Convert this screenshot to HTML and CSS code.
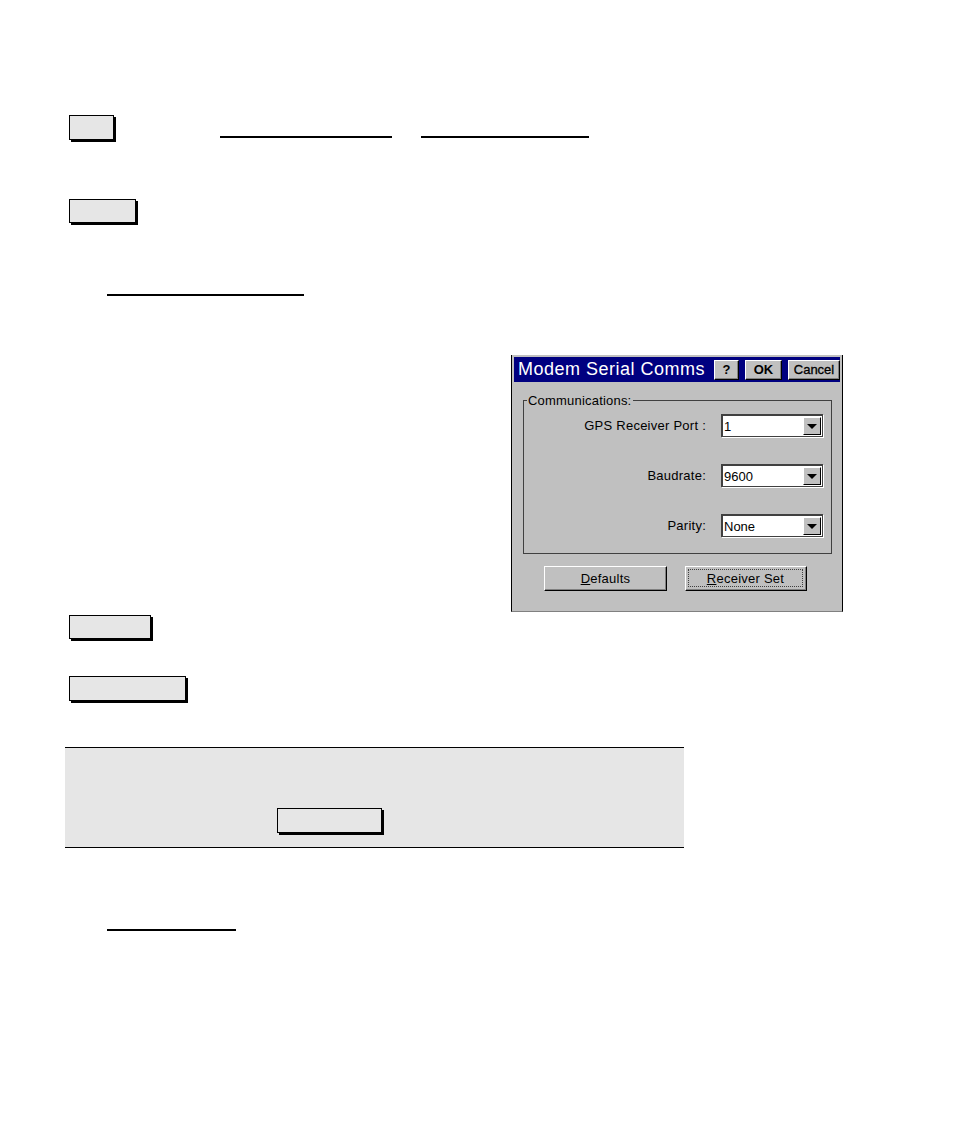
FILE: index.html
```html
<!DOCTYPE html>
<html>
<head>
<meta charset="utf-8">
<link rel="stylesheet" href="styles.css">
</head>
<body>
<div class="page">
  <div class="row1">
    <div class="key key-1"></div>
    <div class="uline uline-a"></div>
    <div class="uline uline-b"></div>
  </div>
  <div class="key key-2"></div>
  <div class="uline uline-c"></div>

  <div class="dialog">
    <div class="titlebar">
      <span class="title">Modem Serial Comms</span>
      <span class="tbtn tbtn-q">?</span>
      <span class="tbtn tbtn-ok">OK</span>
      <span class="tbtn tbtn-cancel">Cancel</span>
    </div>
    <div class="dbody">
      <div class="group">
        <span class="legend">Communications:</span>
        <span class="lbl">GPS Receiver Port :</span>
        <div class="combo"><span class="cval">1</span><span class="cbtn"><span class="tri"></span></span></div>
        <span class="lbl">Baudrate:</span>
        <div class="combo"><span class="cval">9600</span><span class="cbtn"><span class="tri"></span></span></div>
        <span class="lbl">Parity:</span>
        <div class="combo"><span class="cval">None</span><span class="cbtn"><span class="tri"></span></span></div>
      </div>
      <div class="btnrow">
        <div class="pbtn pbtn-def"><span class="ul">D</span>efaults</div>
        <div class="pbtn pbtn-rec"><span class="focus"><span class="ul">R</span>eceiver Set</span></div>
      </div>
    </div>
  </div>

  <div class="key key-3"></div>
  <div class="key key-4"></div>

  <div class="band">
    <div class="key key-5"></div>
  </div>

  <div class="uline uline-d"></div>
</div>
</body>
</html>
```

FILE: styles.css
```css
html, body {
  margin: 0;
  padding: 0;
  background: #ffffff;
}
.page {
  width: 954px;
  height: 1144px;
  padding-top: 115px;
  box-sizing: border-box;
  font-family: "Liberation Sans", Arial, sans-serif;
}
.key {
  background: #e6e6e6;
  border: 1px solid #000;
  box-shadow: 2px 2px 0 #000;
  box-sizing: border-box;
}
.row1 {
  display: flex;
  align-items: flex-end;
  margin-left: 69px;
  height: 25px;
}
.key-1 { width: 45px; height: 25px; }
.uline {
  height: 2px;
  background: #000;
}
.row1 .uline { margin-bottom: 2px; }
.uline-a { margin-left: 106px; width: 172px; }
.uline-b { margin-left: 29px; width: 168px; }
.key-2 { margin: 59px 0 0 69px; width: 67px; height: 24px; }
.uline-c { margin: 71px 0 0 107px; width: 197px; }

/* dialog */
.dialog {
  margin: 59px 0 0 511px;
  width: 332px;
  height: 257px;
  box-sizing: border-box;
  border-left: 1px solid #000;
  border-right: 1px solid #000;
  border-bottom: 1px solid #808080;
  background: #c0c0c0;
  padding: 2px 2px 0 2px;
  display: flex;
  flex-direction: column;
  font-family: "Liberation Sans", Arial, sans-serif;
}
.titlebar {
  height: 25px;
  background: #000080;
  display: flex;
  align-items: center;
  padding-left: 4px;
  flex: none;
}
.title {
  color: #fff;
  font-size: 18px;
  letter-spacing: 0.5px;
  flex: 1;
  white-space: nowrap;
}
.tbtn {
  height: 20px;
  box-sizing: border-box;
  background: #c0c0c0;
  border-top: 1px solid #fff;
  border-left: 1px solid #fff;
  border-right: 1px solid #000;
  border-bottom: 1px solid #000;
  box-shadow: inset -1px -1px 0 #808080;
  font-size: 13px;
  font-weight: bold;
  color: #000;
  display: flex;
  align-items: center;
  justify-content: center;
  margin-left: 6px;
}
.tbtn-q { width: 25px; }
.tbtn-ok { width: 37px; }
.tbtn-cancel { width: 52px; font-weight: normal; -webkit-text-stroke: 0.3px #000; }

.dbody {
  flex: 1;
  padding: 18px 8px 0 9px;
}
.group {
  position: relative;
  border: 1px solid #404040;
  height: 154px;
  box-sizing: border-box;
  display: grid;
  grid-template-columns: 1fr 102px;
  column-gap: 15px;
  row-gap: 27px;
  align-content: start;
  align-items: center;
  padding: 13px 8px 0 0;
}
.legend {
  position: absolute;
  left: 3px;
  top: -8px;
  background: #c0c0c0;
  padding: 0 2px 0 1px;
  font-size: 13px;
  line-height: 15px;
  letter-spacing: 0.2px;
  color: #000;
}
.lbl {
  text-align: right;
  font-size: 13px;
  letter-spacing: 0.25px;
  color: #000;
  white-space: nowrap;
}
.combo {
  height: 23px;
  box-sizing: border-box;
  background: #fff;
  border-top: 2px solid #404040;
  border-left: 2px solid #404040;
  border-right: 1px solid #404040;
  border-bottom: 1px solid #404040;
  box-shadow: 1px 1px 0 #fff;
  display: flex;
  align-items: center;
}
.cval {
  flex: 1;
  font-size: 13px;
  padding-left: 1px;
  color: #000;
}
.cbtn {
  width: 18px;
  height: 18px;
  box-sizing: border-box;
  background: #c0c0c0;
  border-top: 1px solid #fff;
  border-left: 1px solid #fff;
  border-right: 1px solid #000;
  border-bottom: 1px solid #000;
  margin-right: 1px;
  display: flex;
  align-items: center;
  justify-content: center;
}
.tri {
  width: 0;
  height: 0;
  border-left: 5px solid transparent;
  border-right: 5px solid transparent;
  border-top: 5px solid #000;
}
.btnrow {
  display: flex;
  margin-top: 12px;
  padding-left: 21px;
  gap: 18px;
}
.pbtn {
  height: 25px;
  box-sizing: border-box;
  background: #c0c0c0;
  border-top: 1px solid #fff;
  border-left: 1px solid #fff;
  border-right: 1px solid #000;
  border-bottom: 1px solid #000;
  box-shadow: inset -1px -1px 0 #808080;
  font-size: 13px;
  letter-spacing: 0.25px;
  color: #000;
  display: flex;
  align-items: center;
  justify-content: center;
  padding-bottom: 1px;
}
.pbtn-def { width: 123px; }
.pbtn-rec { width: 122px; padding: 2px 3px 3px 2px; }
.focus {
  flex: 1;
  align-self: stretch;
  border: 1px dotted #404040;
  display: flex;
  align-items: center;
  justify-content: center;
}
.ul { text-decoration: underline; }

.key-3 { margin: 3px 0 0 69px; width: 82px; height: 24px; }
.key-4 { margin: 37px 0 0 69px; width: 117px; height: 25px; }

.band {
  margin: 46px 0 0 65px;
  width: 619px;
  height: 101px;
  box-sizing: border-box;
  background: #e6e6e6;
  border-top: 1px solid #000;
  border-bottom: 1px solid #000;
  padding: 60px 0 0 212px;
}
.key-5 { width: 105px; height: 25px; }
.uline-d { margin: 81px 0 0 107px; width: 129px; }
```
